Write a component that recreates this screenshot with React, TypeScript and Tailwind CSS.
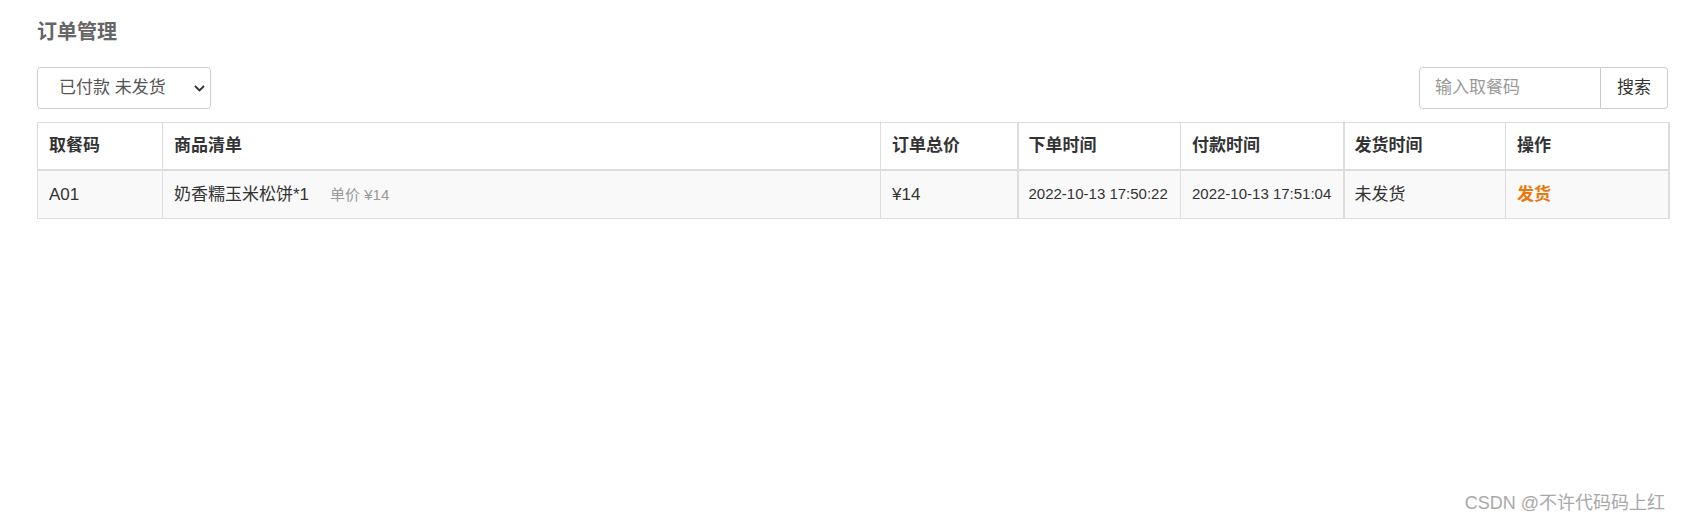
import React from 'react';

const font = { fontFamily: '"Liberation Sans", "Noto Sans CJK SC", sans-serif' };

type Order = {
  code: string;
  item: string;
  unit: string;
  total: string;
  created: string;
  paid: string;
  status: string;
};

const orders: Order[] = [
  {
    code: 'A01',
    item: '奶香糯玉米松饼*1',
    unit: '单价 ¥14',
    total: '¥14',
    created: '2022-10-13 17:50:22',
    paid: '2022-10-13 17:51:04',
    status: '未发货',
  },
];

export default function App() {
  return (
    <div className="relative h-[527px] w-full bg-white pl-[37px] pr-[13px] text-[#333]" style={font}>
      {/* Title */}
      <h2 className="pt-[22px] text-[20px] font-bold leading-[20px] text-[#666]">订单管理</h2>

      {/* Toolbar */}
      <div className="mt-[25px] flex items-center justify-between">
        <div className="flex h-[42px] w-[174px] items-center justify-between rounded-[4px] border border-[#ccc] pl-[21px] pr-[5px] text-[17px] text-[#555]">
          <span>已付款 未发货</span>
          <svg width="11" height="7" viewBox="0 0 11 7" fill="none">
            <path d="M1 1l4.5 4.5L10 1" stroke="#333" strokeWidth="1.8" />
          </svg>
        </div>
        <div className="flex h-[42px] text-[17px]">
          <input
            placeholder="输入取餐码"
            className="h-full w-[182px] rounded-l-[4px] border border-[#ccc] pl-[15px] text-[#555] outline-none placeholder:text-[#999]"
          />
          <button className="h-full w-[67px] rounded-r-[4px] border border-l-0 border-[#ccc] bg-white text-[#333]">
            搜索
          </button>
        </div>
      </div>

      {/* Table */}
      <table className="mt-[13px] w-full table-fixed border-collapse border-r-2 border-[#ddd]">
        <colgroup>
          <col className="w-[125px]" />
          <col className="w-[718px]" />
          <col className="w-[137px]" />
          <col className="w-[163px]" />
          <col className="w-[163px]" />
          <col className="w-[162px]" />
          <col className="w-[163px]" />
        </colgroup>
        <thead>
          <tr className="h-[47px] text-left text-[17px] font-bold">
            <th className="border border-b-2 border-[#ddd] px-[11px]">取餐码</th>
            <th className="border border-b-2 border-[#ddd] px-[11px]">商品清单</th>
            <th className="border border-b-2 border-[#ddd] px-[11px]">订单总价</th>
            <th className="border border-b-2 border-l-2 border-[#ddd] px-[10px]">下单时间</th>
            <th className="border border-b-2 border-[#ddd] px-[11px]">付款时间</th>
            <th className="border border-b-2 border-l-2 border-[#ddd] px-[10px]">发货时间</th>
            <th className="border border-b-2 border-r-2 border-[#ddd] px-[11px]">操作</th>
          </tr>
        </thead>
        <tbody>
          {orders.map((o) => (
            <tr key={o.code} className="h-[49px] bg-[#f9f9f9] text-[17px]">
              <td className="border border-[#ddd] px-[11px]">{o.code}</td>
              <td className="border border-[#ddd] px-[11px]">
                {o.item}
                <span className="ml-[21px] text-[15px] text-[#999]">{o.unit}</span>
              </td>
              <td className="border border-[#ddd] px-[11px]">{o.total}</td>
              <td className="border border-l-2 border-[#ddd] px-[10px] text-[15px]">{o.created}</td>
              <td className="border border-[#ddd] px-[11px] text-[15px]">{o.paid}</td>
              <td className="border border-l-2 border-[#ddd] px-[10px]">{o.status}</td>
              <td className="border border-r-2 border-[#ddd] px-[11px] font-bold text-[#e87a0d]">发货</td>
            </tr>
          ))}
        </tbody>
      </table>

      {/* Watermark */}
      <div className="absolute bottom-[10px] right-[16px] text-[18px] text-[#a8a8a8]">CSDN @不许代码码上红</div>
    </div>
  );
}
